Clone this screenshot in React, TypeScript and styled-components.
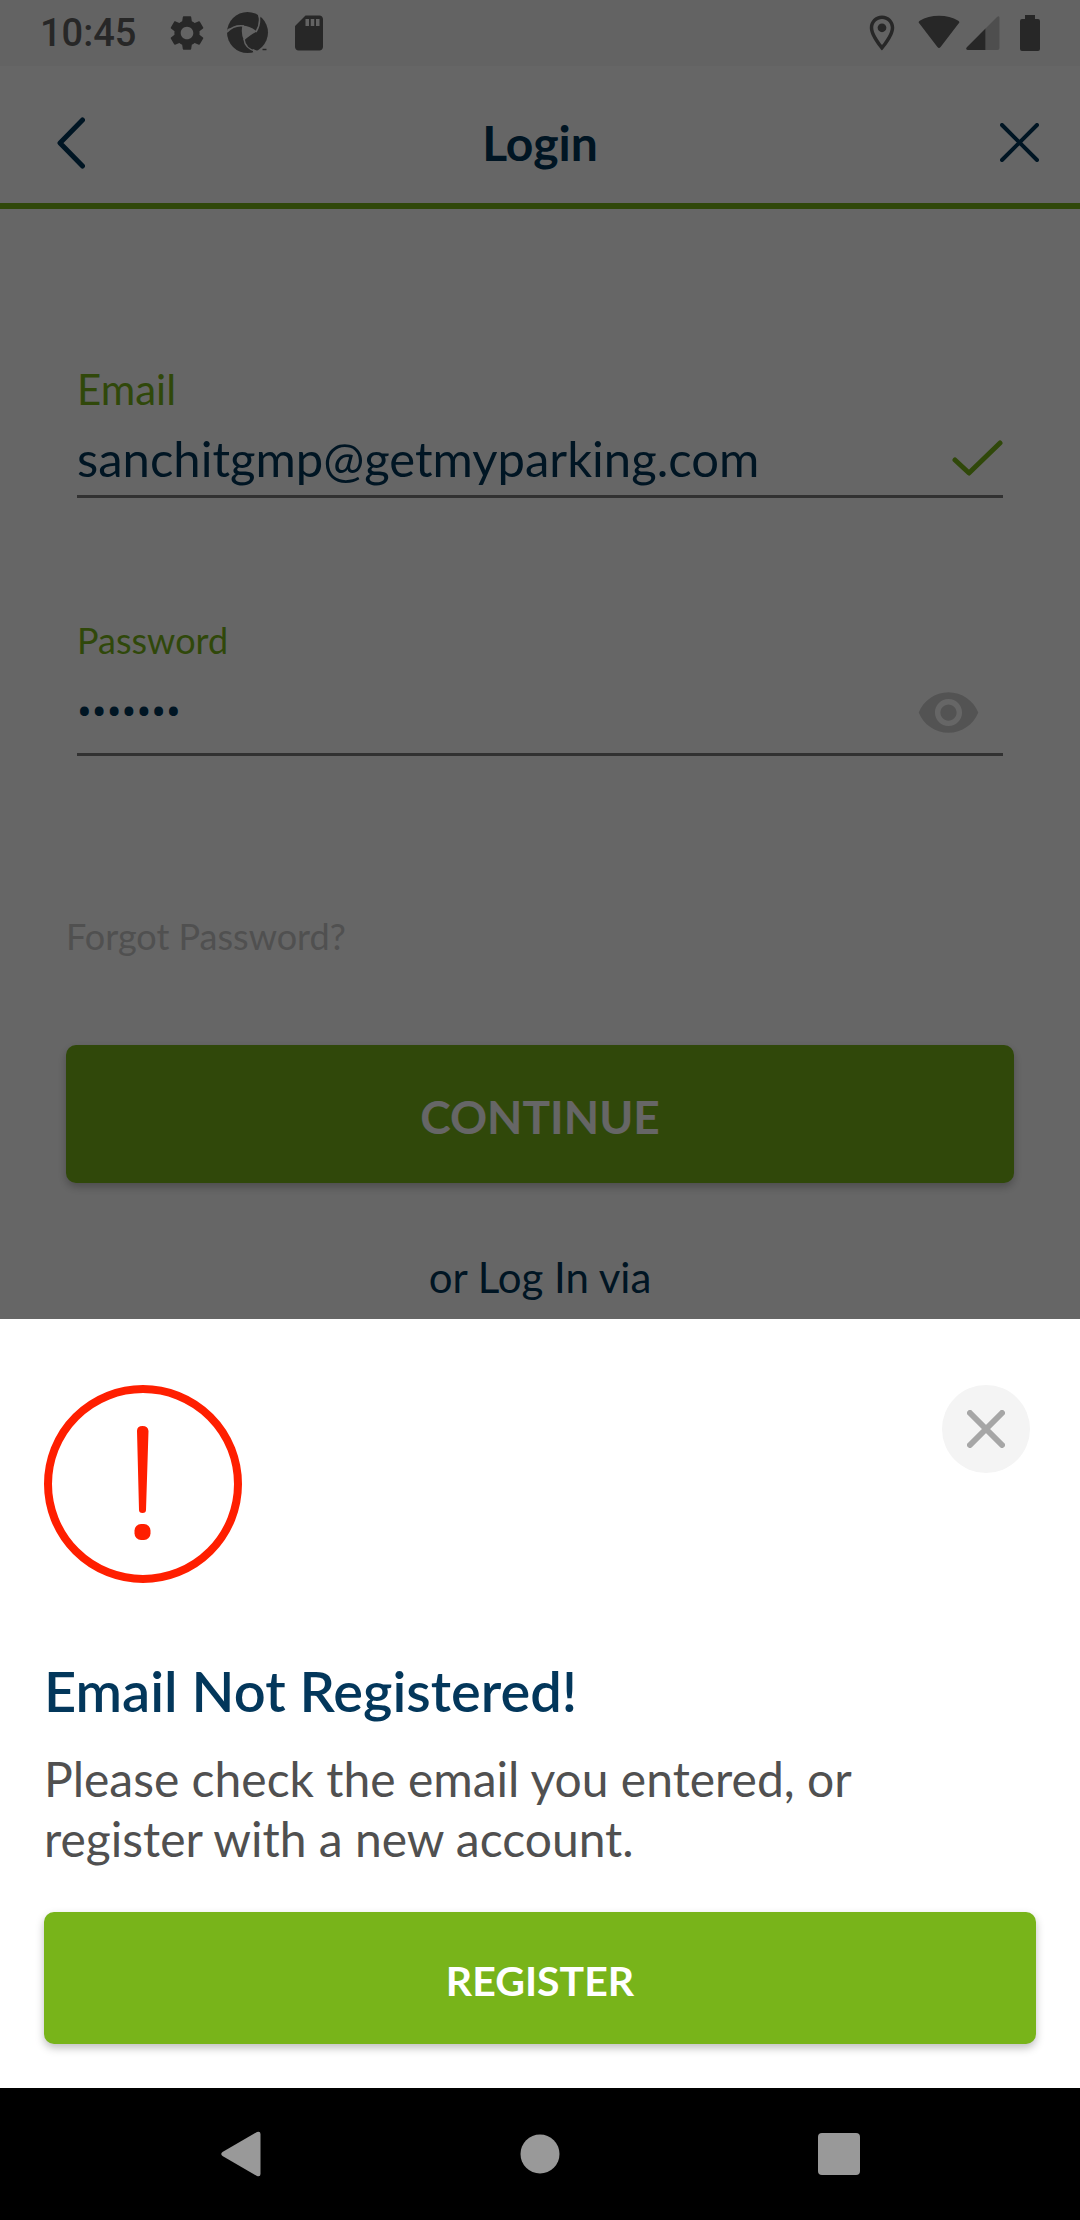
import React, { useState } from "react";
import styled, { createGlobalStyle } from "styled-components";
import { MdSettings, MdSdCard, MdOutlineLocationOn, MdVisibility } from "react-icons/md";

const color = {
  navy: "#003558",
  green: "#78b41a",
  grey: "#505050",
  muted: "#c8c8c8",
  line: "#7a7a7a",
  status: "#626262",
  red: "#ff1f00",
};

const GlobalStyle = createGlobalStyle`
  *, *::before, *::after { box-sizing: border-box; }
  body { margin: 0; background: #000; font-family: Lato, "Open Sans", sans-serif; }
  h1, h2, p { margin: 0; }
  button { border: 0; padding: 0; background: none; font-family: inherit; cursor: pointer; }
  svg { display: block; flex: none; }
`;

const Screen = styled.div`
  display: flex;
  flex-direction: column;
  min-height: 100vh;
`;

const Backdrop = styled.div`
  position: relative;
  flex: 1;
  display: flex;
  flex-direction: column;
  background: #fff;
  &::after {
    content: "";
    position: absolute;
    inset: 0;
    background: rgba(0, 0, 0, 0.6);
    pointer-events: none;
  }
`;

const StatusBar = styled.div`
  display: flex;
  align-items: center;
  justify-content: space-between;
  height: 66px;
  padding: 0 40px;
  background: #f8f8f8;
  color: ${color.status};
`;

const StatusGroup = styled.div<{ $gap: number }>`
  display: flex;
  align-items: center;
  gap: ${(p) => p.$gap}px;
`;

const Clock = styled.time`
  margin-right: 11px;
  font: 500 38px/48px Roboto, sans-serif;
`;

const Header = styled.header`
  display: grid;
  grid-template-columns: 60px 1fr 76px;
  align-items: center;
  height: 143px;
  padding: 16px 41px 0 57px;
  border-bottom: 6px solid ${color.green};
  color: ${color.navy};
`;

const HeaderTitle = styled.h1`
  font-size: 48px;
  line-height: 60px;
  font-weight: 700;
  text-align: center;
`;

const IconButton = styled.button<{ $align?: "flex-start" | "flex-end" }>`
  display: flex;
  align-items: center;
  justify-content: ${(p) => p.$align ?? "center"};
  height: 60px;
  color: inherit;
`;

const Form = styled.form`
  display: flex;
  flex-direction: column;
  padding: 152px 66px 18px;
`;

const Field = styled.div<{ $space: number }>`
  display: flex;
  flex-direction: column;
  margin: 0 11px ${(p) => p.$space}px;
  border-bottom: 3px solid ${color.line};
`;

const Label = styled.label<{ $size: number }>`
  font-size: ${(p) => p.$size}px;
  line-height: 56px;
  color: ${color.green};
`;

const FieldRow = styled.div<{ $height: number; $end: number }>`
  display: flex;
  align-items: center;
  height: ${(p) => p.$height}px;
  padding: 4px ${(p) => p.$end}px 0 0;
`;

const Input = styled.input`
  flex: 1;
  min-width: 0;
  padding: 0;
  border: 0;
  outline: 0;
  background: none;
  color: ${color.navy};
  font: 400 49px/60px Lato, sans-serif;
  &[type="password"] { font: 400 44px/60px Roboto, sans-serif; }
`;

const ForgotLink = styled.a`
  align-self: flex-start;
  margin-bottom: 85px;
  font-size: 36px;
  line-height: 48px;
  color: ${color.muted};
  text-decoration: none;
`;

const PrimaryButton = styled.button<{ $height: number; $size: number }>`
  width: 100%;
  height: ${(p) => p.$height}px;
  padding-top: 4px;
  border-radius: 10px;
  background: ${color.green};
  box-shadow: 0 4px 8px rgba(0, 0, 0, 0.25);
  color: #fff;
  font-size: ${(p) => p.$size}px;
  font-weight: 700;
  text-transform: uppercase;
`;

const Divider = styled.p`
  margin-top: 70px;
  font-size: 42px;
  line-height: 48px;
  color: ${color.navy};
  text-align: center;
`;

const Sheet = styled.section`
  display: flex;
  flex-direction: column;
  padding: 66px 44px 44px;
  background: #fff;
`;

const SheetTop = styled.div`
  display: flex;
  align-items: flex-start;
  justify-content: space-between;
  padding-right: 6px;
`;

const CloseButton = styled.button`
  display: flex;
  align-items: center;
  justify-content: center;
  width: 88px;
  height: 88px;
  border-radius: 50%;
  background: #f4f4f4;
  color: #a6a6a6;
`;

const SheetTitle = styled.h2`
  margin-top: 78px;
  font-size: 56px;
  line-height: 60px;
  font-weight: 600;
  color: #03375b;
`;

const SheetText = styled.p`
  max-width: 880px;
  margin: 28px 0 43px;
  font-size: 48px;
  line-height: 60px;
  color: ${color.grey};
`;

const NavBar = styled.nav`
  display: flex;
  align-items: center;
  justify-content: center;
  gap: 239px;
  height: 132px;
  background: #000;
  color: #999;
`;

const NavButton = styled.button`
  display: flex;
  align-items: center;
  justify-content: center;
  width: 60px;
  height: 60px;
  color: inherit;
`;

const ShutterLogo = () => (
  <svg width="42" height="42" viewBox="0 0 42 42" fill="none" aria-hidden="true">
    <circle cx="20.500" cy="20.500" r="20.500" fill="currentColor" />
    <path d="M15.500 13.500Q23 14 30 19.500 24 22 17 28.500 13.500 21 15.500 13.500Z" fill="#f8f8f8" />
    <path d="M0 20Q7 12.500 17 14M31.500 1Q34.500 11 29 20M29.500 39.500Q18 37 17 27" stroke="#f8f8f8" strokeWidth="1.5" />
    <path d="M30.500 1 34 3.500 32.500 8ZM0 21 .5 17 4 16ZM26 40.500 30.500 39 26 37Z" fill="#f8f8f8" />
    <path d="M35.500 37.500H39.500" stroke="currentColor" strokeWidth="1.5" />
  </svg>
);

const WifiIcon = () => (
  <svg width="42" height="36" viewBox="0 0 42 36" fill="currentColor" aria-hidden="true">
    <path d="M1.400 8.600Q-.2 7 1.700 5.700 10 .7 21 .7T40.300 5.700Q42.200 7 40.600 8.600L22.600 32Q21 34 19.400 32Z" />
  </svg>
);

const SignalIcon = () => (
  <svg width="34" height="36" viewBox="0 0 34 36" fill="currentColor" aria-hidden="true">
    <path d="M19.500 13.500 31 1.900Q33.500 0 33.500 3V33Q33.500 35 31.500 35H19.500Z" opacity=".35" />
    <path d="M.6 32.400 19.500 13.500V35H1.500Q-.6 34.500.6 32.400Z" />
  </svg>
);

const BatteryIcon = () => (
  <svg width="20" height="36" viewBox="0 0 20 36" fill="currentColor" aria-hidden="true">
    <path d="M5 0H15V4H18Q20 4 20 6V34Q20 36 18 36H2Q0 36 0 34V6Q0 4 2 4H5Z" />
  </svg>
);

const Cross = ({ size, stroke }: { size: number; stroke: number }) => {
  const near = stroke / 2;
  const far = size - near;
  return (
    <svg width={size} height={size} stroke="currentColor" strokeWidth={stroke} strokeLinecap="round" aria-hidden="true">
      <path d={`M${near} ${near}L${far} ${far}M${far} ${near}L${near} ${far}`} />
    </svg>
  );
};

const AlertIcon = () => (
  <svg width="198" height="198" viewBox="0 0 198 198" fill={color.red} aria-hidden="true">
    <circle cx="99" cy="99" r="95" fill="none" stroke={color.red} strokeWidth="8" />
    <path d="M93 46Q93 41 98.500 41T104.500 46L102 125Q102 128 98.500 128T95 125Z" />
    <rect x="90.500" y="139" width="16" height="16" rx="6.500" />
  </svg>
);

export default function App() {
  const [email, setEmail] = useState("sanchitgmp@getmyparking.com");
  const [password, setPassword] = useState("parking");

  return (
    <Screen>
      <GlobalStyle />
      <Backdrop>
        <StatusBar>
          <StatusGroup $gap={19}>
            <Clock>10:45</Clock>
            <MdSettings size={42} />
            <ShutterLogo />
            <MdSdCard size={42} />
          </StatusGroup>
          <StatusGroup $gap={20}>
            <StatusGroup $gap={15}>
              <MdOutlineLocationOn size={42} />
              <StatusGroup $gap={6}>
                <WifiIcon />
                <SignalIcon />
              </StatusGroup>
            </StatusGroup>
            <BatteryIcon />
          </StatusGroup>
        </StatusBar>
        <Header>
          <IconButton type="button" aria-label="Back" $align="flex-start">
            <svg width="28" height="52" fill="none" stroke="currentColor" strokeWidth="5" strokeLinecap="round" strokeLinejoin="round" aria-hidden="true">
              <path d="M25.500 3 3 26 25.500 49" />
            </svg>
          </IconButton>
          <HeaderTitle>Login</HeaderTitle>
          <IconButton type="button" aria-label="Close" $align="flex-end">
            <Cross size={39} stroke={4} />
          </IconButton>
        </Header>
        <Form onSubmit={(e) => e.preventDefault()}>
          <Field $space={114}>
            <Label $size={42} htmlFor="email">Email</Label>
            <FieldRow $height={78} $end={0}>
              <Input id="email" type="email" value={email} onChange={(e) => setEmail(e.target.value)} />
              <svg width="51" height="36" fill="none" stroke={color.green} strokeWidth="5" strokeLinecap="round" strokeLinejoin="round" aria-hidden="true">
                <path d="M3 20 17 33 48 3" />
              </svg>
            </FieldRow>
          </Field>
          <Field $space={156}>
            <Label $size={36} htmlFor="password">Password</Label>
            <FieldRow $height={85} $end={22}>
              <Input id="password" type="password" value={password} onChange={(e) => setPassword(e.target.value)} />
              <IconButton type="button" aria-label="Show password">
                <MdVisibility size={65} color="#d0d0d0" />
              </IconButton>
            </FieldRow>
          </Field>
          <ForgotLink href="#forgot">Forgot Password?</ForgotLink>
          <PrimaryButton type="submit" $height={138} $size={46}>Continue</PrimaryButton>
          <Divider>or Log In via</Divider>
        </Form>
      </Backdrop>
      <Sheet role="dialog" aria-labelledby="sheet-title">
        <SheetTop>
          <AlertIcon />
          <CloseButton type="button" aria-label="Dismiss">
            <Cross size={38} stroke={6} />
          </CloseButton>
        </SheetTop>
        <SheetTitle id="sheet-title">Email Not Registered!</SheetTitle>
        <SheetText>Please check the email you entered, or register with a new account.</SheetText>
        <PrimaryButton type="button" $height={132} $size={41}>Register</PrimaryButton>
      </Sheet>
      <NavBar aria-label="System">
        <NavButton type="button" aria-label="Back">
          <svg width="40" height="46" fill="currentColor" aria-hidden="true">
            <path d="M1.500 21 36 1Q39.500 0 39.500 3V43Q39.500 46 36 45L1.500 25Q-1 23 1.500 21Z" />
          </svg>
        </NavButton>
        <NavButton type="button" aria-label="Home">
          <svg width="40" height="40" fill="currentColor" aria-hidden="true">
            <circle cx="20" cy="20" r="19.500" />
          </svg>
        </NavButton>
        <NavButton type="button" aria-label="Recent apps">
          <svg width="42" height="42" fill="currentColor" aria-hidden="true">
            <rect width="42" height="42" rx="4" />
          </svg>
        </NavButton>
      </NavBar>
    </Screen>
  );
}
